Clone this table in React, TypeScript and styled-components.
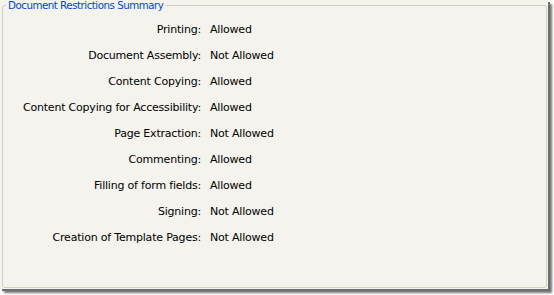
import React from 'react';
import styled, {createGlobalStyle} from 'styled-components';

const GlobalStyle = createGlobalStyle`
  html, body {
    margin: 0;
    padding: 0;
    background: #ffffff;
  }
  body {
    font-family: "DejaVu Sans", Verdana, sans-serif;
  }
`;

const Page = styled.div`
  width: 554px;
  height: 295px;
  overflow: hidden;
`;

const Window = styled.div`
  width: 548px;
  height: 289px;
  background: #f4f3ee;
  box-shadow: 2px 2px 0 #6d6d6d, 4px 4px 2px rgba(60, 60, 60, 0.7);
  box-sizing: border-box;
  padding: 0 1px 0 2px;
`;

const Group = styled.fieldset`
  margin: 0;
  padding: 5px 0 0 0;
  height: 288px;
  box-sizing: border-box;
  border: 1px solid #d0d0bf;
  border-radius: 3px;
`;

const Caption = styled.legend`
  margin-left: 3px;
  padding: 0 3px 0 2px;
  color: #0046d5;
  font-size: 10.3px;
  line-height: 11px;
  letter-spacing: -0.5px;
`;

const List = styled.div`
  display: grid;
  grid-template-columns: 198px 1fr;
  grid-auto-rows: 26px;
  column-gap: 9px;
  align-items: center;
  font-size: 11px;
  letter-spacing: -0.2px;
  color: #000000;
`;

const Label = styled.div`
  text-align: right;
  white-space: nowrap;
`;

const Value = styled.div`
  white-space: nowrap;
`;

const rows: [string, string][] = [
    ['Printing:', 'Allowed'],
    ['Document Assembly:', 'Not Allowed'],
    ['Content Copying:', 'Allowed'],
    ['Content Copying for Accessibility:', 'Allowed'],
    ['Page Extraction:', 'Not Allowed'],
    ['Commenting:', 'Allowed'],
    ['Filling of form fields:', 'Allowed'],
    ['Signing:', 'Not Allowed'],
    ['Creation of Template Pages:', 'Not Allowed']
];

export default function App() {
    return (
        <Page>
            <GlobalStyle/>
            <Window>
                <Group>
                    <Caption>Document Restrictions Summary</Caption>
                    <List>
                        {rows.map(([label, value]) => (
                            <React.Fragment key={label}>
                                <Label>{label}</Label>
                                <Value>{value}</Value>
                            </React.Fragment>
                        ))}
                    </List>
                </Group>
            </Window>
        </Page>
    );
}
